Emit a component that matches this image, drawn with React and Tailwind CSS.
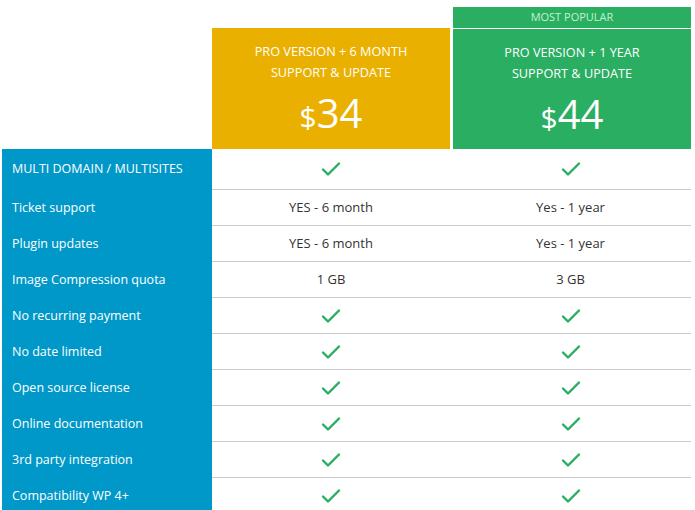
const rows = [
  { label: 'MULTI DOMAIN / MULTISITES', a: true, b: true, first: true },
  { label: 'Ticket support', a: 'YES - 6 month', b: 'Yes - 1 year' },
  { label: 'Plugin updates', a: 'YES - 6 month', b: 'Yes - 1 year' },
  { label: 'Image Compression quota', a: '1 GB', b: '3 GB' },
  { label: 'No recurring payment', a: true, b: true },
  { label: 'No date limited', a: true, b: true },
  { label: 'Open source license', a: true, b: true },
  { label: 'Online documentation', a: true, b: true },
  { label: '3rd party integration', a: true, b: true },
  { label: 'Compatibility WP 4+', a: true, b: true },
]

function Check() {
  return (
    <svg width="20" height="16" viewBox="0 0 20 16" fill="none">
      <polyline points="2,8.5 7,13.5 18,2.5" stroke="#27ae60" strokeWidth="2.4" strokeLinecap="round" strokeLinejoin="round" />
    </svg>
  )
}

function Cell({ value, w }) {
  return (
    <div className={`${w} flex items-center justify-center text-[13px] text-[#333]`}>
      {value === true ? <Check /> : value}
    </div>
  )
}

function PlanHead({ line1, line2, price }) {
  return (
    <div className="flex flex-col items-center text-white">
      <div className="mt-[13px] text-[12.7px] leading-[21px] text-center">
        {line1}
        <br />
        {line2}
      </div>
      <div className="mt-[10px] flex items-baseline font-normal leading-none">
        <span className="text-[30px]">$</span>
        <span className="text-[40px]">{price}</span>
      </div>
    </div>
  )
}

export default function App() {
  return (
    <div
      className="w-[695px] h-[510px] bg-white overflow-hidden"
      style={{ fontFamily: '"Open Sans", "Liberation Sans", sans-serif' }}
    >
      {/* plan headers */}
      <div className="flex">
        <div className="w-[212px]" />
        <div className="w-[238px] mt-[28px] h-[121px] bg-[#e9b000]">
          <PlanHead line1="PRO VERSION + 6 MONTH" line2="SUPPORT & UPDATE" price="34" />
        </div>
        <div className="w-[238px] ml-[3px] flex flex-col">
          <div className="mt-[7px] h-[21px] bg-[#29ae62] flex items-center justify-center text-[11px] text-[#c4f2d0]">
            MOST POPULAR
          </div>
          <div className="mt-px h-[120px] bg-[#29ae62]">
            <PlanHead line1="PRO VERSION + 1 YEAR" line2="SUPPORT & UPDATE" price="44" />
          </div>
        </div>
      </div>

      {/* features */}
      <div className="ml-[2px] flex flex-col">
        {rows.map((r) => (
          <div key={r.label} className="flex">
            <div
              className={`w-[210px] bg-[#0098c8] text-white text-[12.5px] pl-[10px] flex items-center ${r.first ? 'h-[41px] pb-px' : 'h-[36px]'}`}
            >
              {r.label}
            </div>
            <div className={`flex border-b border-[#cccccc] ${r.first ? 'h-[41px]' : 'h-[36px]'}`}>
              <Cell value={r.a} w="w-[238px]" />
              <Cell value={r.b} w="w-[241px]" />
            </div>
          </div>
        ))}
      </div>
    </div>
  )
}
